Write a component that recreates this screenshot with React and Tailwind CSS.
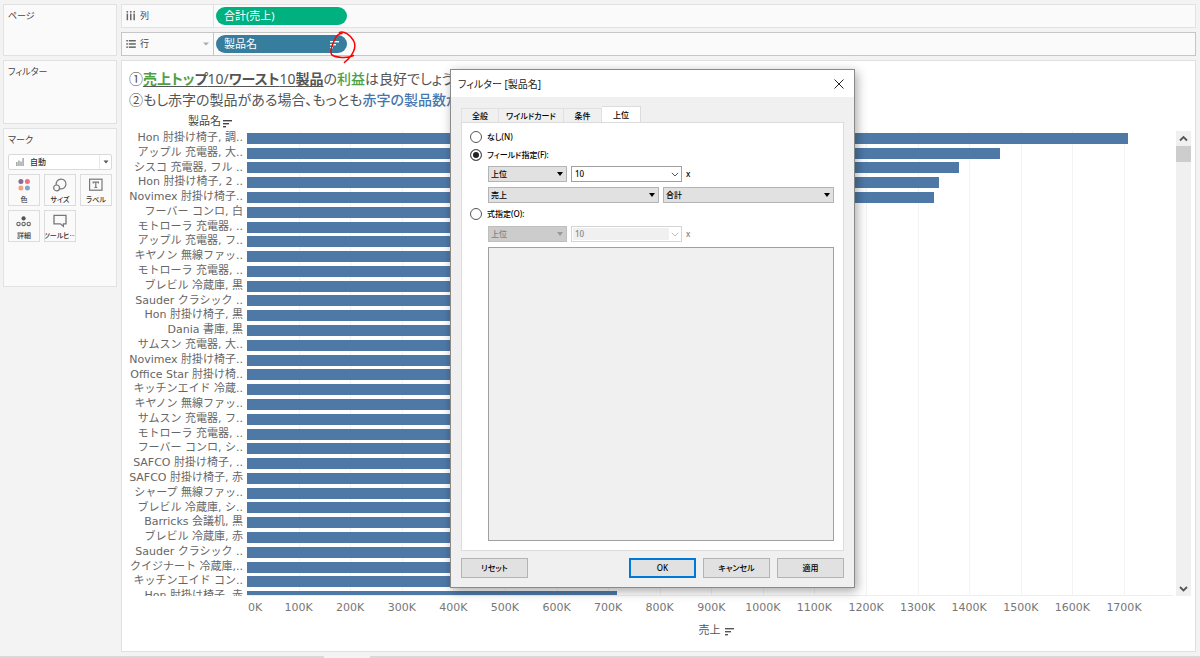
import { useState } from 'react';

const AXIS_MAX = 1795;

const products = [
  { name: 'Hon 肘掛け椅子, 調..', sales: 1708 },
  { name: 'アップル 充電器, 大..', sales: 1459 },
  { name: 'シスコ 充電器, フル ..', sales: 1381 },
  { name: 'Hon 肘掛け椅子, 2 ..', sales: 1341 },
  { name: 'Novimex 肘掛け椅子..', sales: 1331 },
  { name: 'フーバー コンロ, 白', sales: 1150 },
  { name: 'モトローラ 充電器, ..', sales: 1120 },
  { name: 'アップル 充電器, フ..', sales: 1095 },
  { name: 'キヤノン 無線ファッ..', sales: 1070 },
  { name: 'モトローラ 充電器, ..', sales: 1040 },
  { name: 'ブレビル 冷蔵庫, 黒', sales: 1015 },
  { name: 'Sauder クラシック ..', sales: 990 },
  { name: 'Hon 肘掛け椅子, 黒', sales: 970 },
  { name: 'Dania 書庫, 黒', sales: 950 },
  { name: 'サムスン 充電器, 大..', sales: 930 },
  { name: 'Novimex 肘掛け椅子..', sales: 915 },
  { name: 'Office Star 肘掛け椅..', sales: 900 },
  { name: 'キッチンエイド 冷蔵..', sales: 885 },
  { name: 'キヤノン 無線ファッ..', sales: 870 },
  { name: 'サムスン 充電器, フ..', sales: 855 },
  { name: 'モトローラ 充電器, ..', sales: 840 },
  { name: 'フーバー コンロ, シ..', sales: 825 },
  { name: 'SAFCO 肘掛け椅子, ..', sales: 810 },
  { name: 'SAFCO 肘掛け椅子, 赤', sales: 800 },
  { name: 'シャープ 無線ファッ..', sales: 790 },
  { name: 'ブレビル 冷蔵庫, シ..', sales: 780 },
  { name: 'Barricks 会議机, 黒', sales: 770 },
  { name: 'ブレビル 冷蔵庫, 赤', sales: 760 },
  { name: 'Sauder クラシック ..', sales: 750 },
  { name: 'クイジナート 冷蔵庫,..', sales: 740 },
  { name: 'キッチンエイド コン..', sales: 730 },
  { name: 'Hon 肘掛け椅子, 赤', sales: 717 },
];

const ticks = Array.from({ length: 17 }, (_, i) => (i + 1) * 100);

const SortIcon = ({ className }) => (
  <svg viewBox="0 0 9 9" className={className} fill="currentColor" aria-hidden="true">
    <rect x="0" y="1" width="9" height="1.4" />
    <rect x="0" y="4" width="6" height="1.4" />
    <rect x="0" y="7" width="3" height="1.4" />
  </svg>
);

const ColumnsIcon = () => (
  <svg viewBox="0 0 10 10" className="h-[10px] w-[10px]" fill="#666" aria-hidden="true">
    {[0.6, 4, 7.4].map((x) => (
      <g key={x}>
        <rect x={x} y="0" width="1.5" height="1.6" />
        <rect x={x} y="2.6" width="1.5" height="6.6" />
      </g>
    ))}
  </svg>
);

const RowsIcon = () => (
  <svg viewBox="0 0 10 10" className="h-[10px] w-[10px]" fill="#666" aria-hidden="true">
    {[1, 4.2, 7.4].map((y) => (
      <g key={y}>
        <rect x="0.3" y={y} width="1.6" height="1.5" />
        <rect x="2.8" y={y} width="7" height="1.5" />
      </g>
    ))}
  </svg>
);

const ColorIcon = () => (
  <svg viewBox="0 0 16 16" className="h-4 w-4" aria-hidden="true">
    <circle cx="4.9" cy="4.6" r="2.5" fill="#856a94" />
    <circle cx="11.4" cy="4.6" r="2.5" fill="#f66d7f" />
    <circle cx="4.9" cy="11" r="2.5" fill="#f2a37c" />
    <circle cx="11.4" cy="11" r="2.5" fill="#7fa6cb" />
  </svg>
);

const SizeIcon = () => (
  <svg viewBox="0 0 16 16" className="h-4 w-4" fill="none" stroke="#777" strokeWidth="1.2" aria-hidden="true">
    <circle cx="4.6" cy="10.9" r="2.9" />
    <path d="M4.3 8A4.9 4.9 0 1 1 7.5 11.6" />
  </svg>
);

const LabelIcon = () => (
  <svg viewBox="0 0 16 16" className="h-4 w-4" fill="none" stroke="#777" strokeWidth="1.2" aria-hidden="true">
    <rect x="1.6" y="2.2" width="12.4" height="11" />
    <path d="M5.2 6.4V5.1h5.2v1.3M7.8 5.1v5.4M6.4 10.5h2.8" />
  </svg>
);

const DetailIcon = () => (
  <svg viewBox="0 0 16 16" className="h-4 w-4" fill="none" stroke="#666" strokeWidth="1.1" aria-hidden="true">
    <circle cx="7.6" cy="5.4" r="2.1" fill="#555" stroke="none" />
    <circle cx="2.5" cy="10.9" r="1.7" />
    <circle cx="7.6" cy="10.9" r="1.7" />
    <circle cx="12.7" cy="10.9" r="1.7" />
  </svg>
);

const TooltipIcon = () => (
  <svg viewBox="0 0 16 16" className="h-4 w-4" fill="none" stroke="#777" strokeWidth="1.3" aria-hidden="true">
    <path d="M2 2.4h12v8.4h-2.6v2.6L8.4 10.8H2z" />
  </svg>
);

const marks = [
  { label: '色', icon: <ColorIcon /> },
  { label: 'サイズ', icon: <SizeIcon /> },
  { label: 'ラベル', icon: <LabelIcon /> },
  { label: '詳細', icon: <DetailIcon /> },
  { label: 'ツールヒ⋯', icon: <TooltipIcon /> },
];

const Card = ({ title, className, children }) => (
  <section className={`border border-[#e2e2e2] bg-[#fafafa] ${className}`}>
    <h2 className="px-1 pt-[3px] text-[9px] leading-4 text-[#444] [font-feature-settings:'palt']">{title}</h2>
    {children}
  </section>
);

const Sidebar = () => (
  <aside className="flex w-[114px] shrink-0 flex-col gap-1">
    <Card title="ページ" className="h-[52px]" />
    <Card title="フィルター" className="h-16" />
    <Card title="マーク" className="h-[159px]">
      <div className="px-1">
        <div className="relative mt-[6px]">
          <svg viewBox="0 0 8 8" className="absolute top-1 left-2 h-2 w-2" fill="#aaa" aria-hidden="true">
            <rect x="0" y="4" width="1.6" height="4" />
            <rect x="2.1" y="2.5" width="1.6" height="5.5" />
            <rect x="4.2" y="3.5" width="1.6" height="4.5" />
            <rect x="6.3" y="0" width="1.6" height="8" />
          </svg>
          <select
            aria-label="マークの種類"
            className="block h-4 w-full appearance-none rounded-xs border border-[#d9d9d9] bg-white pl-[21px] text-[8px] leading-3 font-medium text-[#333]"
          >
            <option>自動</option>
          </select>
          <span className="pointer-events-none absolute inset-y-px right-px flex w-3 items-center justify-center border-l border-[#e8e8e8]">
            <svg viewBox="0 0 6 4" className="h-1 w-[6px]" aria-hidden="true">
              <path d="M0.5 0.5h5L3 3.5z" fill="#555" />
            </svg>
          </span>
        </div>
        <div className="mt-1 grid grid-cols-3 gap-1">
          {marks.map((mark) => (
            <button
              key={mark.label}
              className="flex h-8 flex-col items-center gap-[2px] overflow-hidden border border-[#dcdcdc] pt-[2px] text-[7px] leading-[10px] font-medium whitespace-nowrap text-[#333] [font-feature-settings:'palt']"
            >
              {mark.icon}
              {mark.label}
            </button>
          ))}
        </div>
      </div>
    </Card>
  </aside>
);

const Shelves = () => (
  <div className="flex flex-col gap-1">
    <div className="flex h-6 items-stretch border border-[#e2e2e2] bg-[#fafafa]">
      <div className="flex w-[92px] shrink-0 items-center gap-1 border-r border-[#e2e2e2] px-1 text-[9px] text-[#444]">
        <ColumnsIcon />
        列
      </div>
      <button className="mt-[2px] ml-[2px] h-[18px] w-[131px] rounded-full bg-[#00b180] px-2 text-left text-[11px] leading-[18px] text-white">
        合計(売上)
      </button>
    </div>
    <div className="flex h-6 items-stretch border border-[#c6c6c6] bg-[#fafafa]">
      <div className="flex w-[92px] shrink-0 items-center gap-1 border-r border-[#c6c6c6] px-1 text-[9px] text-[#444]">
        <RowsIcon />
        行
        <svg viewBox="0 0 6 4" className="ml-auto h-1 w-[6px]" aria-hidden="true">
          <path d="M0 0.5h6L3 3.5z" fill="#aaa" />
        </svg>
      </div>
      <div className="relative mt-[2px] ml-[2px]">
        <button className="flex h-[18px] w-[131px] items-center justify-between rounded-full bg-[#367d9e] px-2 text-[11px] leading-[18px] text-white">
          製品名
          <SortIcon className="h-[9px] w-[9px]" />
        </button>
        <svg
          viewBox="0 0 30 34"
          className="pointer-events-none absolute -top-1 left-[112px] z-10 h-[34px] w-[30px]"
          fill="none"
          stroke="#f00"
          strokeWidth="1.5"
          strokeLinecap="round"
          aria-hidden="true"
        >
          <path d="M11.500 1.500C16 -0.500 22 4 25.500 9.500C28.500 15 26 21 22 26C19.500 29 17.500 30.500 16.500 31.500M25.500 24.500C19 28 8 26.500 4 24C1.500 21 3.500 15 7 8C8.500 4.500 10 2.500 14 2.500" />
        </svg>
      </div>
    </div>
  </div>
);

const Chart = () => (
  <section className="flex-1 border border-[#e0e0e0] bg-white pt-[7px] text-[#666]">
    <p className="h-[21px] overflow-hidden pl-[7px] text-[14px] leading-[21px] whitespace-nowrap text-[#555] [font-feature-settings:'palt']">
      ①
      <span className="underline underline-offset-2">
        <b className="text-[#4ea143]">売上トッ</b>
        <b>プ</b>10/<b>ワースト</b>10<b>製品</b>
      </span>
      の<span className="font-medium text-[#4ea143]">利益</span>は良好でしょうか
    </p>
    <p className="h-[21px] overflow-hidden pl-[7px] text-[14px] leading-[21px] whitespace-nowrap text-[#555] [font-feature-settings:'palt']">
      ②もし赤字の製品がある場合、もっとも<span className="font-medium text-[#4577ae]">赤字の製品数が</span>
    </p>

    <div className="flex h-[21px] w-[125px] items-center justify-end gap-[2px] pt-[2px] pr-[15px] text-[11px] text-[#444]">
      製品名
      <SortIcon className="mt-1 h-[9px] w-[9px]" />
    </div>

    <div className="flex pr-1 font-['DejaVu_Sans','Noto_Sans_CJK_JP',sans-serif]">
      <div className="h-[465px] w-[125px] shrink-0 overflow-hidden">
        <ul className="grid h-[473px] auto-rows-fr pr-1 text-right text-[11px]">
          {products.map((product, index) => (
            <li key={index} className="leading-[14px] whitespace-nowrap">
              {product.name}
            </li>
          ))}
        </ul>
      </div>

      <div className="mr-[3px] min-w-0 flex-1">
        <div className="relative h-[465px] overflow-hidden border-b border-[#eee]">
          {ticks.map((tick) => (
            <span
              key={tick}
              className="absolute inset-y-0 w-px bg-[#f3f3f3]"
              style={{ left: `${(tick / AXIS_MAX) * 100}%` }}
            />
          ))}
          <div className="relative grid h-[473px] auto-rows-fr items-center">
            {products.map((product, index) => (
              <div
                key={index}
                className="h-[11px] bg-[#4e79a7]"
                style={{ width: `${(product.sales / AXIS_MAX) * 100}%` }}
              />
            ))}
          </div>
        </div>
        <div className="relative h-[27px] text-[11px] leading-6 text-[#777]">
          <span className="pl-px">0K</span>
          {ticks.map((tick) => (
            <span
              key={tick}
              className="absolute top-0 -translate-x-1/2"
              style={{ left: `${(tick / AXIS_MAX) * 100}%` }}
            >
              {tick}K
            </span>
          ))}
        </div>
        <div className="flex h-4 items-center justify-center gap-1 pl-3 text-[11px] text-[#555]">
          売上
          <SortIcon className="h-[9px] w-[9px]" />
        </div>
      </div>

      <div className="flex h-[465px] w-[15px] shrink-0 flex-col items-center bg-[#f0f0f0]">
        <svg viewBox="0 0 15 15" className="h-[15px] w-[15px]" fill="none" stroke="#555" strokeWidth="1.8" aria-hidden="true">
          <path d="M4 9.5L7.5 6L11 9.5" />
        </svg>
        <div className="h-4 w-full bg-[#cdcdcd]" />
        <svg viewBox="0 0 15 15" className="mt-auto h-[15px] w-[15px]" fill="none" stroke="#555" strokeWidth="1.8" aria-hidden="true">
          <path d="M4 6L7.5 9.5L11 6" />
        </svg>
      </div>
    </div>
  </section>
);

const DialogSelect = ({ label, value, className, disabled }) => (
  <div className={`relative ${className}`}>
    <select
      aria-label={label}
      disabled={disabled}
      className="block h-4 w-full appearance-none border border-[#b4b4b4] bg-[#e1e1e1] pl-[2px] text-[8px] leading-3 font-medium text-black disabled:border-[#bfbfbf] disabled:bg-[#cccccc] disabled:text-[#838383] disabled:opacity-100"
    >
      <option>{value}</option>
    </select>
    <svg viewBox="0 0 6 4" className="pointer-events-none absolute top-[6px] right-1 h-1 w-[6px]" aria-hidden="true">
      <path d="M0 0h6L3 4z" fill={disabled ? '#999' : '#000'} />
    </svg>
  </div>
);

const CountBox = ({ label, disabled }) => (
  <div className={`flex h-4 w-[111px] items-center border bg-white ${disabled ? 'border-[#d4d4d4]' : 'border-[#a0a0a0]'}`}>
    <input
      type="text"
      aria-label={label}
      defaultValue="10"
      disabled={disabled}
      className="ml-px h-3 w-24 bg-white pl-[2px] text-[8px] leading-3 text-black disabled:bg-[#f0f0f0] disabled:text-[#838383]"
    />
    <svg viewBox="0 0 8 5" className="mx-[2px] h-[5px] w-2 shrink-0" fill="none" stroke={disabled ? '#bbb' : '#555'} aria-hidden="true">
      <path d="M0.8 0.8L4 4L7.2 0.8" />
    </svg>
  </div>
);

const RadioRow = ({ label, value, selected, onSelect }) => (
  <label className="flex h-[18px] items-center gap-[5px]">
    <input
      type="radio"
      name="top-filter"
      value={value}
      checked={selected === value}
      onChange={() => onSelect(value)}
      className="h-3 w-3 appearance-none rounded-full border border-[#555] bg-white checked:bg-[#222] checked:shadow-[inset_0_0_0_2px_white]"
    />
    {label}
  </label>
);

const DialogButton = ({ children, primary, className = '' }) => (
  <button
    className={`h-5 w-[67px] bg-[#e1e1e1] font-medium ${primary ? 'border-2 border-[#0078d7]' : 'border border-[#b4b4b4]'} ${className}`}
  >
    {children}
  </button>
);

const FilterDialog = () => {
  const [mode, setMode] = useState('field');
  const tabClass = 'h-[14px] border-t border-r border-[#e0e0e0] bg-[#f0f0f0] font-medium';

  return (
    <div
      role="dialog"
      aria-label="フィルター [製品名]"
      className="absolute top-[69px] left-[450px] z-20 w-[405px] border border-[#8a8a8a] bg-[#f0f0f0] text-[8px] leading-3 text-black shadow-[2px_3px_10px_rgba(0,0,0,0.35)] [font-feature-settings:'palt']"
    >
      <header className="flex h-[27px] items-center justify-between bg-white pr-[10px] pl-[7px]">
        <h1 className="text-[10px] text-[#222]">フィルター [製品名]</h1>
        <button aria-label="閉じる">
          <svg viewBox="0 0 10 10" className="h-[10px] w-[10px]" fill="none" stroke="#222" aria-hidden="true">
            <path d="M0.5 0.5L9.5 9.5M9.5 0.5L0.5 9.5" />
          </svg>
        </button>
      </header>

      <div className="px-[10px] pt-[9px] pb-[9px]">
        <div role="tablist" className="flex items-end">
          <button role="tab" className={`w-[38px] border-l ${tabClass}`}>全般</button>
          <button role="tab" className={`w-[65px] ${tabClass}`}>ワイルドカード</button>
          <button role="tab" className={`w-[38px] ${tabClass}`}>条件</button>
          <button role="tab" aria-selected="true" className="h-4 w-[39px] border-t border-r border-[#dcdcdc] bg-white font-medium">
            上位
          </button>
        </div>

        <div className="flex flex-col border border-[#dcdcdc] bg-white pt-[5px] pr-[9px] pb-[9px] pl-2 font-medium">
          <RadioRow label="なし(N)" value="none" selected={mode} onSelect={setMode} />
          <RadioRow label="フィールド指定(F):" value="field" selected={mode} onSelect={setMode} />
          <div className="flex flex-col gap-[5px] pt-[2px] pl-[18px]">
            <div className="flex items-center gap-1">
              <DialogSelect label="方向" value="上位" className="w-[79px]" />
              <CountBox label="件数" />
              <span>x</span>
            </div>
            <div className="flex gap-1">
              <DialogSelect label="フィールド" value="売上" className="flex-1" />
              <DialogSelect label="集計" value="合計" className="flex-1" />
            </div>
          </div>
          <div className="pt-[2px]">
            <RadioRow label="式指定(O):" value="formula" selected={mode} onSelect={setMode} />
          </div>
          <div className="flex flex-col gap-[5px] pt-[3px] pl-[18px]">
            <div className="flex items-center gap-1 text-[#838383]">
              <DialogSelect label="式の方向" value="上位" className="w-[79px]" disabled />
              <CountBox label="式の件数" disabled />
              <span>x</span>
            </div>
            <textarea
              aria-label="式"
              disabled
              className="block h-[294px] w-full resize-none border border-[#a0a0a0] bg-[#f0f0f0]"
            />
          </div>
        </div>

        <footer className="flex gap-[7px] pt-[7px]">
          <DialogButton className="mr-auto">リセット</DialogButton>
          <DialogButton primary>OK</DialogButton>
          <DialogButton>キャンセル</DialogButton>
          <DialogButton>適用</DialogButton>
        </footer>
      </div>
    </div>
  );
};

const App = () => (
  <div className="relative flex min-h-screen flex-col bg-[#f3f3f3] font-['Noto_Sans','Noto_Sans_CJK_JP',sans-serif]">
    <div className="flex flex-1 gap-1 pt-1 pr-1 pb-1 pl-[3px]">
      <Sidebar />
      <main className="flex min-w-0 flex-1 flex-col gap-1">
        <Shelves />
        <Chart />
      </main>
    </div>
    <div className="flex h-[2px] bg-[#d9d9d9]">
      <div className="ml-[27%] h-full w-[46px] bg-[#f3f3f3]" />
    </div>
    <FilterDialog />
  </div>
);

export default App;
